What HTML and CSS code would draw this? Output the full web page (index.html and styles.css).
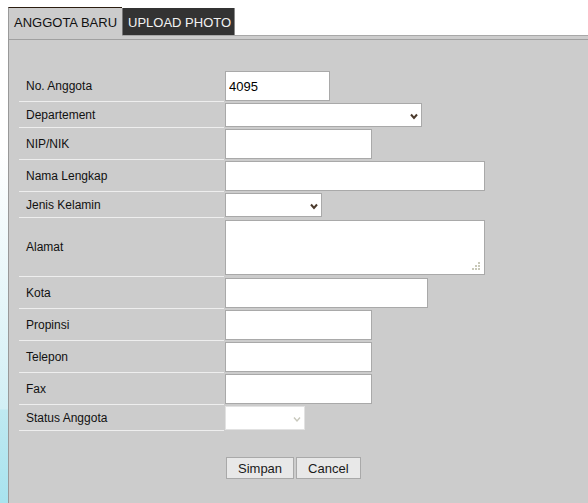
FILE: index.html
```
<!DOCTYPE html>
<html lang="id">
<head>
<meta charset="utf-8">
<title>Anggota Baru</title>
<link rel="stylesheet" href="styles.css">
</head>
<body>
<div class="page">
  <ul class="tabs">
    <li class="tab tab-active">ANGGOTA BARU</li>
    <li class="tab tab-dark">UPLOAD PHOTO</li>
  </ul>
  <div class="panel">
    <div class="panel-body">
      <form class="form">
        <label class="label">No. Anggota</label>
        <div class="field"><input class="input w-105" type="text" value="4095"></div>

        <label class="label">Departement</label>
        <div class="field"><span class="select w-197"><select class="select-box"><option></option></select><svg class="chev" width="8" height="7" viewBox="0 0 8 7"><path d="M1 1.5 L4 5 L7 1.5" fill="none" stroke="#4b3a2c" stroke-width="2"/></svg></span></div>

        <label class="label">NIP/NIK</label>
        <div class="field"><input class="input w-147" type="text"></div>

        <label class="label">Nama Lengkap</label>
        <div class="field"><input class="input w-260" type="text"></div>

        <label class="label">Jenis Kelamin</label>
        <div class="field"><span class="select w-97"><select class="select-box"><option></option></select><svg class="chev" width="8" height="7" viewBox="0 0 8 7"><path d="M1 1.5 L4 5 L7 1.5" fill="none" stroke="#4b3a2c" stroke-width="2"/></svg></span></div>

        <label class="label">Alamat</label>
        <div class="field"><span class="area-wrap"><textarea class="area"></textarea><svg class="grip" width="8" height="8" viewBox="0 0 8 8"><rect x="6" y="0" width="2" height="2"/><rect x="3" y="3" width="2" height="2"/><rect x="6" y="3" width="2" height="2"/><rect x="0" y="6" width="2" height="2"/><rect x="3" y="6" width="2" height="2"/><rect x="6" y="6" width="2" height="2"/></svg></span></div>

        <label class="label">Kota</label>
        <div class="field"><input class="input w-203" type="text"></div>

        <label class="label">Propinsi</label>
        <div class="field"><input class="input w-147" type="text"></div>

        <label class="label">Telepon</label>
        <div class="field"><input class="input w-147" type="text"></div>

        <label class="label">Fax</label>
        <div class="field"><input class="input w-147" type="text"></div>

        <label class="label">Status Anggota</label>
        <div class="field"><span class="select select-disabled w-80"><select class="select-box" disabled><option></option></select><svg class="chev" width="8" height="7" viewBox="0 0 8 7"><path d="M1 1.5 L4 5 L7 1.5" fill="none" stroke="#c8c8bc" stroke-width="1.4"/></svg></span></div>

        <div class="actions">
          <button type="button" class="btn">Simpan</button>
          <button type="button" class="btn">Cancel</button>
        </div>
      </form>
    </div>
  </div>
</div>
</body>
</html>
```
FILE: styles.css
```
* { box-sizing: border-box; }
html, body { margin: 0; padding: 0; }
body {
  font-family: "Liberation Sans", Arial, sans-serif;
  min-height: 503px;
  background: linear-gradient(to bottom, #ffffff 0, #ffffff 150px, #e6f6f9 300px, #d2eff5 409px, #bfe9f1 410px, #a8e3ee 503px);
  background-repeat: no-repeat;
}
.page { padding: 7px 0 0 8px; }

.tabs {
  display: flex;
  align-items: flex-start;
  list-style: none;
  margin: 0;
  padding: 0;
  height: 29px;
  border-bottom: 1px solid #a8a8a8;
}
.tab {
  font-size: 13px;
  line-height: 15px;
  padding: 7px 0 0 5px;
  white-space: nowrap;
  overflow: hidden;
}
.tab-active {
  width: 114px;
  height: 29px;
  margin-bottom: -1px;
  background: #cccccc;
  color: #111;
  border-top: 1px solid #2b1d10;
  border-left: 1px solid #9a9a9a;
  position: relative;
}
.tab-dark {
  width: 113px;
  height: 27px;
  margin-top: 1px;
  background: #333333;
  color: #f2f2f2;
  border-left: 1px solid #777;
  border-right: 1px solid #8a8a8a;
}

.panel {
  background: #cccccc;
  border-left: 1px solid #999;
  padding-top: 3px;
  min-height: 467px;
}
.panel-body {
  border-top: 1px solid #a0a0a0;
  padding: 30px 0 30px 10px;
}

.form {
  display: grid;
  grid-template-columns: 205px auto;
  justify-content: start;
}
.label {
  display: flex;
  align-items: center;
  padding-left: 7px;
  border-bottom: 1px solid #eeeeee;
  font-size: 12px;
  color: #111;
}
.field {
  display: flex;
  align-items: flex-start;
  padding: 1px 0 1px 1px;
}
.input {
  height: 30px;
  margin: 0;
  padding: 0 3px;
  border: 1px solid #a9a9a9;
  border-radius: 0;
  background: #fff;
  font-family: "Liberation Sans", Arial, sans-serif;
  font-size: 13px;
  color: #000;
  outline: none;
}
.w-80 { width: 80px; }
.w-97 { width: 97px; }
.w-105 { width: 105px; }
.w-147 { width: 147px; }
.w-197 { width: 197px; }
.w-203 { width: 203px; }
.w-260 { width: 260px; }

.select {
  position: relative;
  display: block;
  height: 24px;
}
.select-box {
  display: block;
  width: 100%;
  height: 24px;
  margin: 0;
  padding: 0 3px;
  -webkit-appearance: none;
  appearance: none;
  border: 1px solid #a9a9a9;
  border-radius: 0;
  background: #fff;
  font-family: "Liberation Sans", Arial, sans-serif;
  font-size: 13px;
  opacity: 1;
}
.select-disabled .select-box {
  border-color: #e2e2e2;
  background-color: #ffffff;
  opacity: 1;
}
.chev {
  position: absolute;
  right: 4px;
  top: 10px;
  pointer-events: none;
}

.area-wrap {
  position: relative;
  display: block;
  margin: 1px 0;
  height: 55px;
}
.area {
  display: block;
  width: 260px;
  height: 55px;
  margin: 0;
  border: 1px solid #a9a9a9;
  border-radius: 0;
  background: #fff;
  resize: none;
  font-family: "Liberation Sans", Arial, sans-serif;
  font-size: 13px;
}
.grip {
  position: absolute;
  right: 5px;
  bottom: 5px;
  fill: #c9c9b9;
}

.actions {
  grid-column: 2;
  display: flex;
  gap: 2px;
  padding: 26px 0 0 2px;
}
.btn {
  height: 22px;
  margin: 0;
  padding: 0 11px;
  border: 1px solid #a9a9a9;
  border-radius: 0;
  background: #e8e8e8;
  font-family: "Liberation Sans", Arial, sans-serif;
  font-size: 13px;
  color: #1a1a1a;
}
```
